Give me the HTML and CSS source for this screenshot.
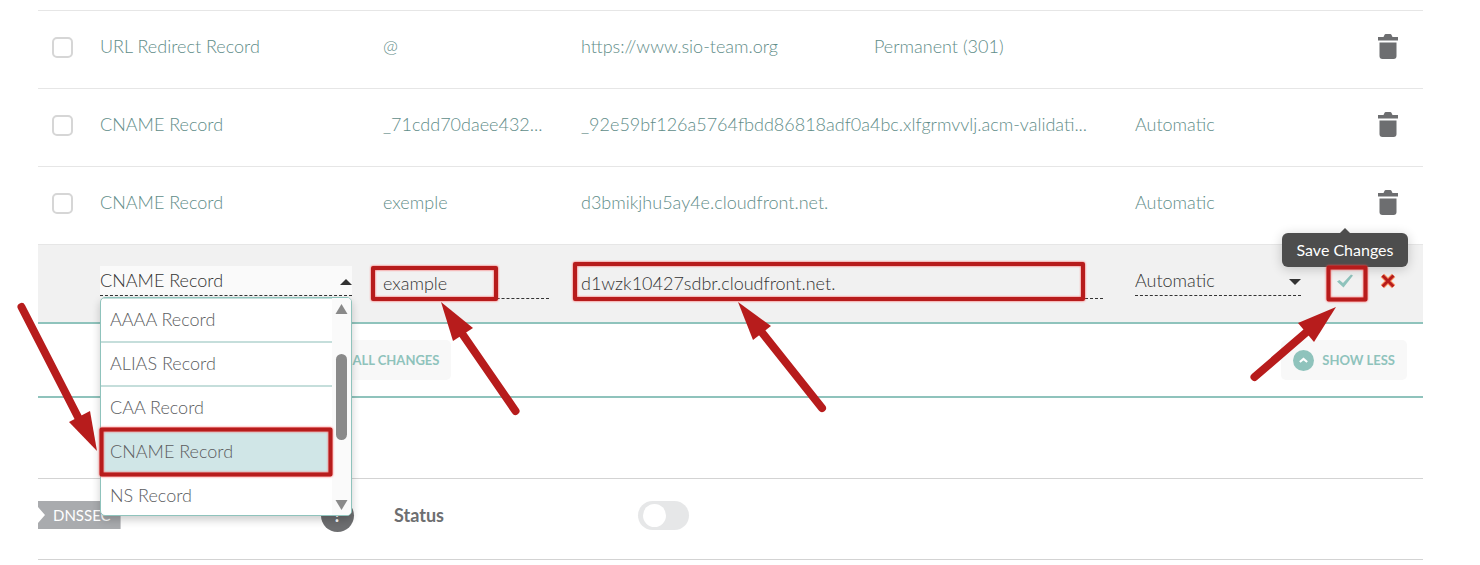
FILE: index.html
```html
<!DOCTYPE html>
<html lang="en">
<head>
    <meta charset="UTF-8">
    <meta name="viewport" content="width=device-width, initial-scale=1.0">
    <title>Advanced DNS</title>
    <link rel="stylesheet" href="styles.css">
</head>
<body>

<!-- shared icons -->
<svg class="sprite" aria-hidden="true">
    <symbol id="icon-trash" viewBox="0 0 20 25">
        <path d="M0 3h5.500l1.200-2.500Q7 0 7.600 0h4.800q.6 0 .9.500L14.500 3H20v3.500H0z"/>
        <path d="M1.500 8.500h17V22q0 3-3 3h-11q-3 0-3-3z"/>
    </symbol>
</svg>

<main class="page">
    <table class="records">
        <colgroup>
            <col class="col-check">
            <col class="col-type">
            <col class="col-host">
            <col class="col-value">
            <col class="col-redirect">
            <col class="col-ttl">
            <col class="col-actions">
        </colgroup>
        <tbody>
            <tr>
                <td><input type="checkbox" class="check" aria-label="Select URL Redirect Record"></td>
                <td>URL Redirect Record</td>
                <td>@</td>
                <td>https://www.sio-team.org</td>
                <td colspan="2">Permanent (301)</td>
                <td class="actions"><button type="button" class="icon-btn" aria-label="Remove"><svg class="trash"><use href="#icon-trash"/></svg></button></td>
            </tr>
            <tr>
                <td><input type="checkbox" class="check" aria-label="Select CNAME Record"></td>
                <td>CNAME Record</td>
                <td>_71cdd70daee432...</td>
                <td colspan="2">_92e59bf126a5764fbdd86818adf0a4bc.xlfgrmvvlj.acm-validati...</td>
                <td>Automatic</td>
                <td class="actions"><button type="button" class="icon-btn" aria-label="Remove"><svg class="trash"><use href="#icon-trash"/></svg></button></td>
            </tr>
            <tr>
                <td><input type="checkbox" class="check" aria-label="Select CNAME Record"></td>
                <td>CNAME Record</td>
                <td>exemple</td>
                <td colspan="2">d3bmikjhu5ay4e.cloudfront.net.</td>
                <td>Automatic</td>
                <td class="actions"><button type="button" class="icon-btn" aria-label="Remove"><svg class="trash"><use href="#icon-trash"/></svg></button></td>
            </tr>
            <tr class="editing">
                <td></td>
                <td>
                    <div class="dropdown type-dropdown">
                        <select class="dropdown-select" aria-label="Record type">
                            <option>CNAME Record</option>
                        </select>
                        <svg class="arrow" viewBox="0 0 12 6"><path d="M0 6L6 0l6 6z"/></svg>
                        <div class="menu">
                            <ul class="menu-list" role="listbox" aria-label="Record types">
                                <li role="option">AAAA Record</li>
                                <li role="option">ALIAS Record</li>
                                <li role="option">CAA Record</li>
                                <li role="option" class="selected" aria-selected="true">CNAME Record</li>
                                <li role="option">NS Record</li>
                            </ul>
                            <div class="scrollbar">
                                <svg class="scroll-arrow" viewBox="0 0 12 10"><path d="M6 0l6 10H0z"/></svg>
                                <div class="thumb"></div>
                                <svg class="scroll-arrow" viewBox="0 0 12 10"><path d="M6 10L0 0h12z"/></svg>
                            </div>
                        </div>
                    </div>
                </td>
                <td><input type="text" class="field host-field" value="example" aria-label="Host"></td>
                <td colspan="2"><input type="text" class="field value-field" value="d1wzk10427sdbr.cloudfront.net." aria-label="Target"></td>
                <td>
                    <div class="dropdown ttl-dropdown">
                        <select class="dropdown-select" aria-label="TTL">
                            <option>Automatic</option>
                        </select>
                        <svg class="arrow" viewBox="0 0 12 6"><path d="M0 0h12L6 6z"/></svg>
                    </div>
                </td>
                <td>
                    <div class="edit-actions">
                        <button type="button" class="icon-btn save" aria-label="Save Changes">
                            <svg class="tick" viewBox="0 0 16 14"><path d="M0 7.500L2.500 6 6 9 14 .5 16 1.500 6.500 13.500z"/></svg>
                            <span class="tooltip">Save Changes</span>
                        </button>
                        <button type="button" class="icon-btn" aria-label="Cancel">
                            <svg class="cross" viewBox="0 0 16 16">
                                <path class="glow" d="M2.500 2.500l11 11M13.500 2.500l-11 11"/>
                                <path d="M2.500 2.500l11 11M13.500 2.500l-11 11"/>
                            </svg>
                        </button>
                    </div>
                </td>
            </tr>
        </tbody>
    </table>

    <div class="toolbar">
        <button type="button" class="btn">Save all changes</button>
        <button type="button" class="btn">
            <svg class="less" viewBox="0 0 20 20"><circle cx="10" cy="10" r="10"/><path d="M6.500 11.500L10 8.500l3.500 3"/></svg>
            Show less
        </button>
    </div>

    <section class="dnssec">
        <div><span class="tag">DNSSEC</span></div>
        <button type="button" class="help" aria-label="Help">?</button>
        <label class="status" for="dnssec-status">Status</label>
        <input type="checkbox" class="toggle" id="dnssec-status">
    </section>
</main>

<!-- tutorial marks: boxes and arrows -->
<svg class="marks" viewBox="0 0 1480 565" aria-hidden="true">
    <g class="boxes">
        <rect x="373" y="268" width="123" height="31"/>
        <rect x="575" y="264" width="508" height="35"/>
        <rect x="101.500" y="429.500" width="229" height="45"/>
        <rect x="1328.500" y="267.500" width="37" height="32"/>
    </g>
    <g class="shafts">
        <path d="M21.500 307L80 421"/>
        <path d="M515.500 411L461 332"/>
        <path d="M822 408L760 330"/>
        <path d="M1254.500 377L1309 330"/>
    </g>
    <g class="heads">
        <path d="M97 451L69 422l21-11z"/>
        <path d="M441 302l32 26-20 13z"/>
        <path d="M738 302l33 24-18 14z"/>
        <path d="M1336 307l-38 16 16 19z"/>
    </g>
</svg>

</body>
</html>
```
FILE: styles.css
```css
* {
    box-sizing: border-box;
}
body {
    margin: 0;
    background-color: #ffffff;
    color: #6d6e70;
    font-family: Lato, "Open Sans", sans-serif;
    font-size: 18px;
    line-height: 24px;
}
button, input, select {
    font: inherit;
    color: inherit;
}
.sprite {
    position: absolute;
    width: 0;
    height: 0;
}
.page {
    margin: 0 57px 0 38px;
    padding-top: 10px;
}

/* records table */
.records {
    width: 100%;
    table-layout: fixed;
    border-collapse: separate;
    border-spacing: 0;
}
.col-check { width: 62px; }
.col-type { width: 283px; }
.col-host { width: 198px; }
.col-redirect { width: 261px; }
.col-ttl { width: 192px; }
.col-actions { width: 96px; }
.records td {
    height: 78px;
    padding: 0 0 8px;
    border-top: 1px solid #e6e6e6;
    color: #5f8d89;
    font-weight: 300;
    white-space: nowrap;
    vertical-align: middle;
}
.records .actions {
    padding: 0 25px 1px 0;
    text-align: right;
}
.check {
    appearance: none;
    display: block;
    width: 21px;
    height: 21px;
    margin: 4px 0 0 14px;
    border: 2px solid #d6d6d6;
    border-radius: 5px;
    background-color: #ffffff;
}
.icon-btn {
    padding: 0;
    border: none;
    background: none;
    cursor: pointer;
}
.icon-btn svg {
    display: block;
}
.trash {
    width: 20px;
    height: 25px;
    fill: #6d6e70;
}

/* row being edited */
.records .editing td {
    height: 80px;
    padding-bottom: 5px;
    background-color: #f1f1f1;
    border-bottom: 2px solid #8fc3bc;
    color: #333333;
}
.dropdown {
    position: relative;
    height: 30px;
    border-bottom: 1px dashed #333333;
}
.type-dropdown {
    width: 252px;
    background-color: #fafafa;
}
.ttl-dropdown {
    width: 166px;
}
.dropdown-select {
    appearance: none;
    display: block;
    width: 100%;
    height: 28px;
    padding: 0;
    border: none;
    background: none;
}
.arrow {
    position: absolute;
    right: 0;
    top: 13px;
    width: 12px;
    height: 6px;
    fill: #333333;
}
.field {
    display: block;
    height: 30px;
    margin-top: 5px;
    padding: 0;
    border: none;
    border-bottom: 1px dashed #333333;
    background: none;
}
.host-field {
    width: 166px;
}
.value-field {
    width: calc(100% - 32px);
}

.menu {
    position: absolute;
    z-index: 1;
    top: 31px;
    left: 0;
    width: 252px;
    height: 219px;
    display: flex;
    overflow: hidden;
    border: 1px solid #8fc3bc;
    border-radius: 5px;
    background-color: #ffffff;
    box-shadow: 0 4px 8px rgba(0, 0, 0, 0.2);
    color: #5c5d5f;
}
.menu-list {
    flex: 1;
    margin: 0;
    padding: 0;
    list-style: none;
    border-top: 1px solid #c5dedb;
}
.menu-list li {
    height: 44px;
    padding-left: 9px;
    border-bottom: 2px solid #c5dedb;
    line-height: 40px;
}
.menu-list .selected {
    background-color: #d0e6e7;
}
.scrollbar {
    display: flex;
    flex-direction: column;
    align-items: center;
    width: 19px;
    padding: 6px 0 5px;
    background-color: #fafafa;
}
.scroll-arrow {
    width: 13px;
    height: 10px;
    fill: #8a8a8a;
}
.thumb {
    width: 11px;
    height: 86px;
    margin: 40px 0 auto;
    border-radius: 6px;
    background-color: #8a8a8a;
}

.edit-actions {
    display: flex;
    align-items: center;
    gap: 27px;
    padding-left: 10px;
}
.save {
    position: relative;
}
.tick {
    width: 16px;
    height: 14px;
    fill: #8fc3bc;
}
.cross {
    width: 16px;
    height: 16px;
    fill: none;
    stroke: #b71c1c;
    stroke-width: 3;
}
.cross .glow {
    stroke: #ff9b6a;
    stroke-width: 5;
}
.tooltip {
    position: absolute;
    z-index: 2;
    left: 50%;
    bottom: 21px;
    transform: translateX(-50%);
    width: 126px;
    border-radius: 6px;
    background-color: #4d4d4d;
    box-shadow: 0 2px 12px rgba(0, 0, 0, 0.2);
    color: #ffffff;
    font-size: 16px;
    font-weight: 400;
    line-height: 34px;
    text-align: center;
}
.tooltip::before {
    content: "";
    position: absolute;
    left: 58px;
    top: -5px;
    border: 5px solid transparent;
    border-top: none;
    border-bottom-color: #4d4d4d;
}

/* buttons under the table */
.toolbar {
    display: flex;
    justify-content: space-between;
    padding: 16px 16px 16px 268px;
    border-bottom: 2px solid #8fc3bc;
}
.btn {
    display: flex;
    align-items: center;
    gap: 8px;
    height: 40px;
    padding: 0 12px;
    border: none;
    border-radius: 5px;
    background-color: #f8f8f8;
    color: #8fc3bc;
    font-size: 13px;
    font-weight: 700;
    text-transform: uppercase;
    cursor: pointer;
}
.less {
    width: 21px;
    height: 21px;
    fill: #8fc3bc;
}
.less path {
    fill: none;
    stroke: #ffffff;
    stroke-width: 2;
}

/* DNSSEC */
.dnssec {
    display: grid;
    grid-template-columns: 283px 73px 244px 1fr;
    align-items: center;
    height: 82px;
    margin-top: 80px;
    padding-bottom: 8px;
    border-top: 1px solid #d3d3d3;
    border-bottom: 1px solid #d3d3d3;
}
.tag {
    display: inline-block;
    padding: 0 10px 0 15px;
    background-color: #a9abae;
    clip-path: polygon(0 0, 100% 0, 100% 100%, 0 100%, 0 22px, 7px 14px, 0 6px);
    color: #ffffff;
    font-size: 15px;
    line-height: 28px;
}
.help {
    width: 33px;
    height: 33px;
    padding: 0;
    border: none;
    border-radius: 50%;
    background-color: #6d6e70;
    color: #ffffff;
    font-weight: 700;
}
.status {
    font-weight: 700;
}
.toggle {
    appearance: none;
    width: 51px;
    height: 29px;
    margin: 0;
    padding: 3px 5px;
    border-radius: 15px;
    background-color: #e6e7e8;
}
.toggle::before {
    content: "";
    display: block;
    width: 23px;
    height: 23px;
    border-radius: 50%;
    background-color: #ffffff;
}

.marks {
    position: absolute;
    z-index: 3;
    top: 0;
    left: 0;
    width: 1480px;
    height: 565px;
    pointer-events: none;
}
.boxes {
    fill: none;
    stroke: #b71c1c;
    stroke-width: 4;
    stroke-linejoin: round;
    filter: drop-shadow(0 0 1px #ff5050);
}
.shafts {
    stroke: #b71c1c;
    stroke-width: 8;
    stroke-linecap: round;
}
.heads {
    fill: #b71c1c;
}
```
